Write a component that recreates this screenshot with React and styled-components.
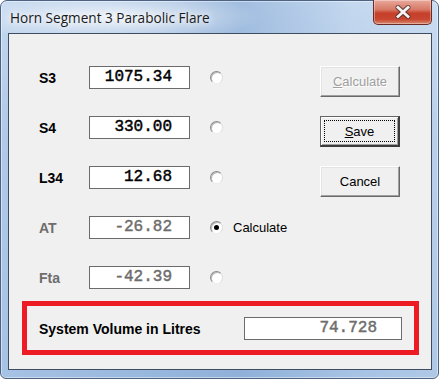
import React from "react";
import styled, { createGlobalStyle, css } from "styled-components";

const Global = createGlobalStyle`
  html, body { margin: 0; padding: 0; background: #ffffff; }
  body { width: 439px; height: 379px; overflow: hidden; }
`;

const Window = styled.div`
  box-sizing: border-box;
  width: 439px;
  height: 379px;
  border: 1px solid #4d6383;
  border-radius: 7px 7px 6px 6px;
  padding: 0 6px 8px 7px;
  display: flex;
  flex-direction: column;
  background:
    radial-gradient(ellipse 150px 26px at 110px 16px, rgba(255,255,255,0.75), rgba(255,255,255,0) 100%),
    linear-gradient(90deg, rgba(255,255,255,0.0) 0%, rgba(110,150,200,0.4) 55%, rgba(255,255,255,0) 80%, rgba(255,255,255,0.1) 100%),
    linear-gradient(180deg, #c4d8ef 0%, #b2cae8 35%, #a6c2e4 100%);
  box-shadow: inset 0 0 0 1px rgba(255,255,255,0.45);
`;

const TitleBar = styled.div`
  height: 32px;
  display: flex;
  align-items: flex-start;
  flex-shrink: 0;
`;

const Title = styled.div`
  margin: 8px 0 0 2px;
  font-family: "Open Sans", "Noto Sans", sans-serif;
  font-size: 13.6px;
  line-height: 17px;
  color: #1a1a1a;
  text-shadow: 0 0 6px #ffffff, 0 0 10px rgba(255,255,255,0.9);
`;

const CloseButton = styled.div`
  margin: -1px 0 0 auto;
  width: 59px;
  height: 25px;
  box-sizing: border-box;
  border: 1px solid #6b2a23;
  border-top: none;
  border-radius: 0 0 5px 5px;
  background: linear-gradient(180deg, #e9a99c 0%, #d77966 40%, #c6402b 55%, #c84530 80%, #d98a6e 100%);
  box-shadow: inset 0 0 0 1px rgba(255,255,255,0.35);
  display: flex;
  align-items: center;
  justify-content: center;
`;

const Client = styled.div`
  flex: 1;
  border: 1px solid #3e4c60;
  background: #f0f0f0;
  padding: 32px 0 0 0;
  display: flex;
  flex-direction: column;
`;

const TopSection = styled.div`
  display: flex;
  padding-left: 30px;
`;

const FormColumn = styled.div`
  width: 281px;
  display: flex;
  flex-direction: column;
  gap: 27px;
`;

const Row = styled.div`
  height: 23px;
  display: flex;
  align-items: center;
`;

const Label = styled.div`
  width: 50px;
  font-family: "Liberation Sans", Arial, sans-serif;
  font-weight: bold;
  font-size: 14px;
  color: ${(p) => (p.$disabled ? "#6d6d6d" : "#000")};
`;

const ValueBox = styled.div`
  box-sizing: border-box;
  width: ${(p) => p.$width || 101}px;
  height: 23px;
  border: 1px solid #6b6b6b;
  background: #fff;
  font-family: "Liberation Mono", "Courier New", monospace;
  font-weight: normal;
  -webkit-text-stroke: 0.45px ${(p) => (p.$disabled ? "#6d6d6d" : "#000")};
  font-size: 16px;
  line-height: 18px;
  text-align: right;
  padding: 1px ${(p) => p.$padRight || 17}px 0 0;
  color: ${(p) => (p.$disabled ? "#6d6d6d" : "#000")};
  white-space: pre;
`;

const Radio = styled.div`
  box-sizing: border-box;
  width: 13px;
  height: 13px;
  margin-left: 20px;
  border-radius: 50%;
  background: #fff;
  border: 1px solid;
  border-color: #8a8a8a #dcdcdc #ececec #8a8a8a;
  box-shadow: inset 1px 1px 0 #b8b8b8;
  display: flex;
  align-items: center;
  justify-content: center;
  ${(p) =>
    p.$checked &&
    css`
      &::after {
        content: "";
        width: 5px;
        height: 5px;
        border-radius: 50%;
        background: #000;
      }
    `}
`;

const RadioText = styled.span`
  margin-left: 10px;
  font-family: "Liberation Sans", Arial, sans-serif;
  font-size: 13px;
  color: #000;
`;

const ButtonColumn = styled.div`
  display: flex;
  flex-direction: column;
  gap: 19px;
`;

const Button = styled.div`
  box-sizing: border-box;
  width: 80px;
  height: 31px;
  background: #f0f0f0;
  border: 1px solid;
  border-color: #ffffff #696969 #696969 #ffffff;
  box-shadow: inset -1px -1px 0 #a0a0a0, inset 1px 1px 0 #e3e3e3;
  display: flex;
  align-items: center;
  justify-content: center;
  font-family: "Liberation Sans", Arial, sans-serif;
  font-size: 13px;
  color: #000;
  position: relative;
  ${(p) =>
    p.$disabled &&
    css`
      color: #a0a0a0;
      text-shadow: 1px 1px 0 #ffffff;
    `}
  ${(p) =>
    p.$default &&
    css`
      border-width: 1px 2px 2px 1px;
      border-color: #646464 #3c3c3c #3c3c3c #646464;
      box-shadow: inset 1px 1px 0 #ffffff, inset -1px -1px 0 #a0a0a0;
      &::before {
        content: "";
        position: absolute;
        inset: 3px 3px 3px 3px;
        border: 1px dotted #000;
      }
    `}
  u { text-decoration: underline; text-underline-offset: 1px; }
`;

const VolumeBox = styled.div`
  box-sizing: border-box;
  margin: 12px 12px 0 13px;
  height: 54px;
  border: 5px solid #ed1c24;
  padding: 0 12px 0 12px;
  display: flex;
  align-items: center;
  justify-content: space-between;
`;

const VolumeLabel = styled.div`
  font-family: "Liberation Sans", Arial, sans-serif;
  font-weight: bold;
  font-size: 14px;
  color: #000;
  margin-top: 1px;
`;

const rows = [
  { label: "S3", value: "1075.34" },
  { label: "S4", value: "330.00" },
  { label: "L34", value: "12.68" },
  { label: "AT", value: "-26.82", disabled: true, checked: true, text: "Calculate" },
  { label: "Fta", value: "-42.39", disabled: true },
];

export default function App() {
  return (
    <>
      <Global />
      <Window>
        <TitleBar>
          <Title>Horn Segment 3 Parabolic Flare</Title>
          <CloseButton>
            <svg width="18" height="14" viewBox="0 0 18 14">
              <path d="M4 2.5 L14 11.5 M14 2.5 L4 11.5" stroke="#3a2a2a" strokeWidth="5" strokeLinecap="round" fill="none" opacity="0.7" />
              <path d="M4 2.5 L14 11.5 M14 2.5 L4 11.5" stroke="#f4f4f4" strokeWidth="2.8" strokeLinecap="square" fill="none" />
            </svg>
          </CloseButton>
        </TitleBar>
        <Client>
          <TopSection>
            <FormColumn>
              {rows.map((r) => (
                <Row key={r.label}>
                  <Label $disabled={r.disabled}>{r.label}</Label>
                  <ValueBox $disabled={r.disabled}>{r.value}</ValueBox>
                  <Radio $checked={r.checked} />
                  {r.text && <RadioText>{r.text}</RadioText>}
                </Row>
              ))}
            </FormColumn>
            <ButtonColumn>
              <Button $disabled>
                <span><u>C</u>alculate</span>
              </Button>
              <Button $default>
                <span><u>S</u>ave</span>
              </Button>
              <Button>Cancel</Button>
            </ButtonColumn>
          </TopSection>
          <VolumeBox>
            <VolumeLabel>System Volume in Litres</VolumeLabel>
            <ValueBox $width={158} $disabled $padRight={24}>74.728</ValueBox>
          </VolumeBox>
        </Client>
      </Window>
    </>
  );
}
